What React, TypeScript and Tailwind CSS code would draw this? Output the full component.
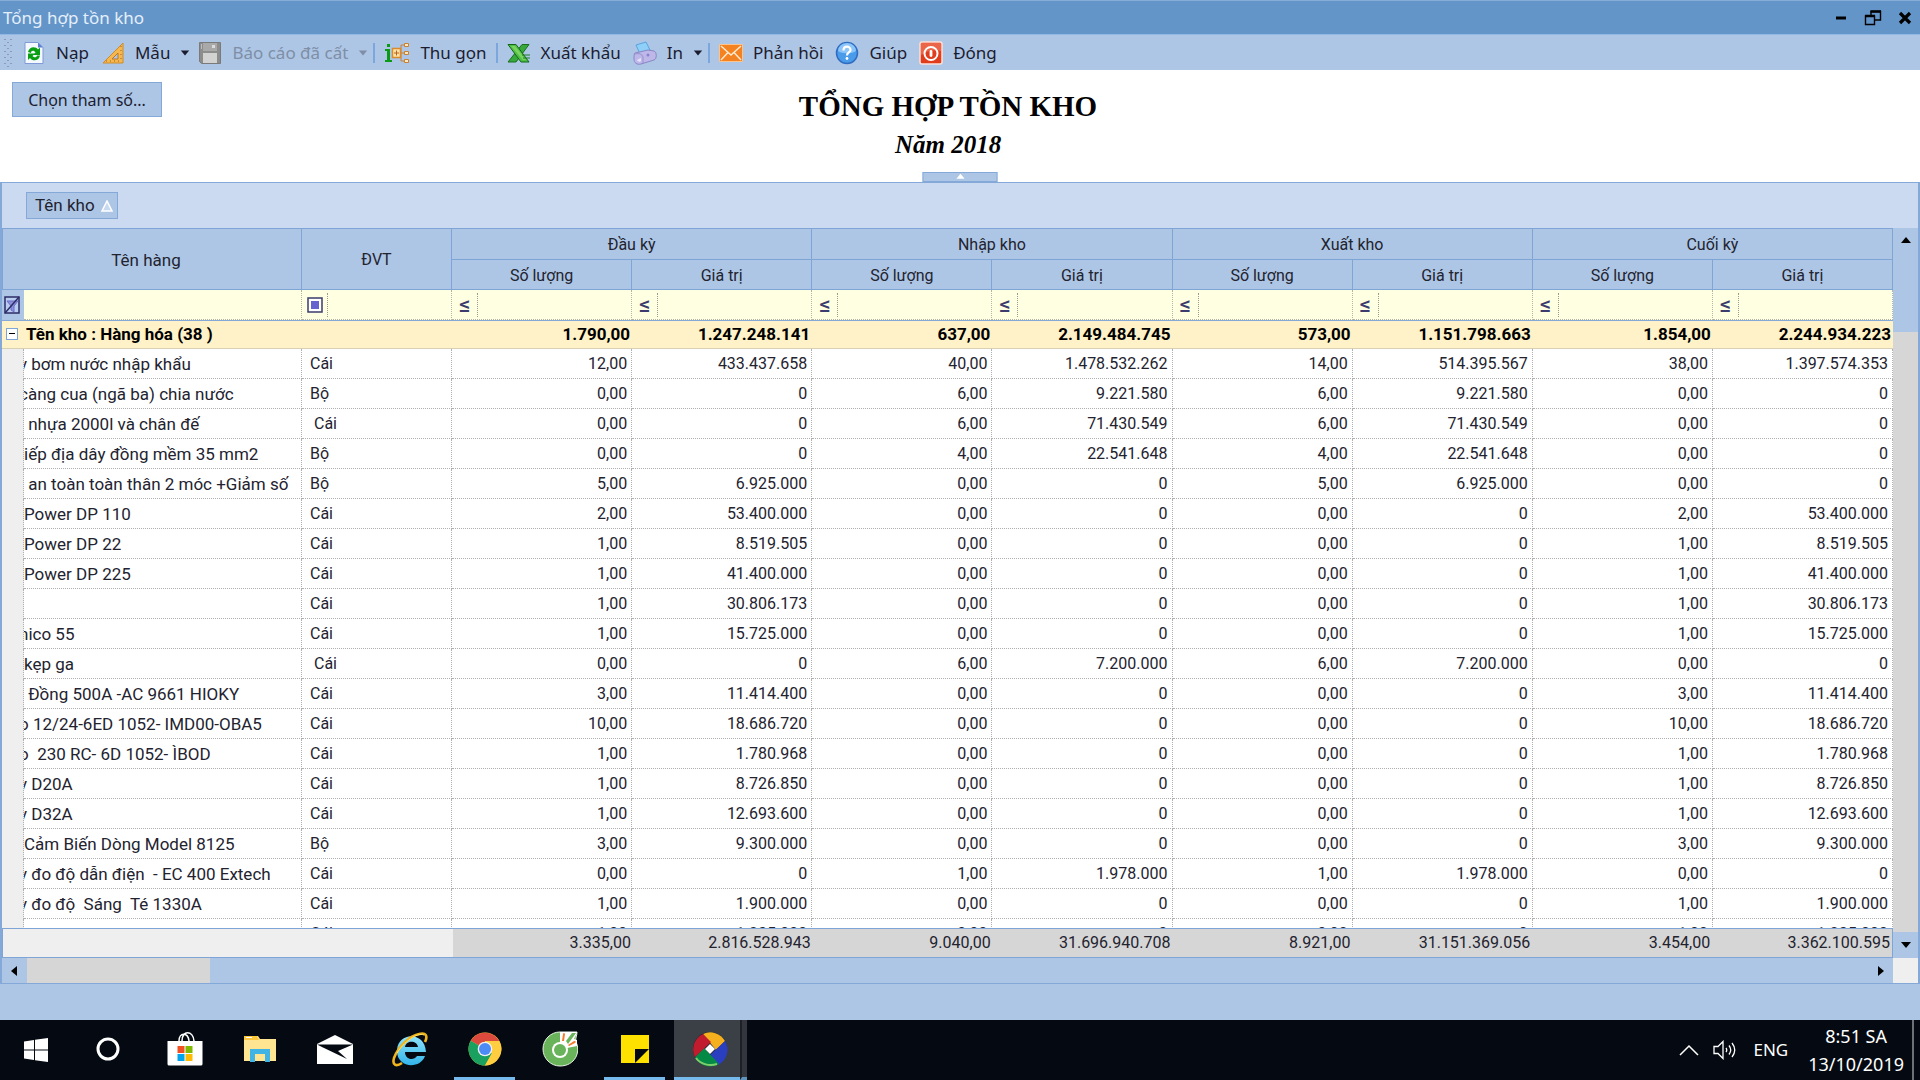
import { useState } from 'react'
import type { ReactNode } from 'react'

const UI_FONT = "font-['Noto_Sans','Open_Sans',sans-serif]"
const GRID_FONT = "font-['Roboto','Liberation_Sans',sans-serif]"

interface StockRow {
  name: string
  // name starts with a letter that the horizontal scroll cuts in half
  cut?: boolean
  unit: string
  values: string[]
}

const GROUPS = ['Đầu kỳ', 'Nhập kho', 'Xuất kho', 'Cuối kỳ']

const GROUP_SUMS = ['1.790,00', '1.247.248.141', '637,00', '2.149.484.745', '573,00', '1.151.798.663', '1.854,00', '2.244.934.223']

const TOTALS = ['3.335,00', '2.816.528.943', '9.040,00', '31.696.940.708', '8.921,00', '31.151.369.056', '3.454,00', '3.362.100.595']

const ROWS: StockRow[] = [
  { name: 'y bơm nước nhập khẩu', cut: true, unit: 'Cái', values: ['12,00', '433.437.658', '40,00', '1.478.532.262', '14,00', '514.395.567', '38,00', '1.397.574.353'] },
  { name: 'càng cua (ngã ba) chia nước', cut: true, unit: 'Bộ', values: ['0,00', '0', '6,00', '9.221.580', '6,00', '9.221.580', '0,00', '0'] },
  { name: ' nhựa 2000l và chân đế', unit: ' Cái', values: ['0,00', '0', '6,00', '71.430.549', '6,00', '71.430.549', '0,00', '0'] },
  { name: 'iếp địa dây đồng mềm 35 mm2', unit: 'Bộ', values: ['0,00', '0', '4,00', '22.541.648', '4,00', '22.541.648', '0,00', '0'] },
  { name: ' an toàn toàn thân 2 móc +Giảm số', unit: 'Bộ', values: ['5,00', '6.925.000', '0,00', '0', '5,00', '6.925.000', '0,00', '0'] },
  { name: 'Power DP 110', unit: 'Cái', values: ['2,00', '53.400.000', '0,00', '0', '0,00', '0', '2,00', '53.400.000'] },
  { name: 'Power DP 22', unit: 'Cái', values: ['1,00', '8.519.505', '0,00', '0', '0,00', '0', '1,00', '8.519.505'] },
  { name: 'Power DP 225', unit: 'Cái', values: ['1,00', '41.400.000', '0,00', '0', '0,00', '0', '1,00', '41.400.000'] },
  { name: '', unit: 'Cái', values: ['1,00', '30.806.173', '0,00', '0', '0,00', '0', '1,00', '30.806.173'] },
  { name: 'nico 55', cut: true, unit: 'Cái', values: ['1,00', '15.725.000', '0,00', '0', '0,00', '0', '1,00', '15.725.000'] },
  { name: 'kẹp ga', unit: ' Cái', values: ['0,00', '0', '6,00', '7.200.000', '6,00', '7.200.000', '0,00', '0'] },
  { name: ' Đồng 500A -AC 9661 HIOKY', unit: 'Cái', values: ['3,00', '11.414.400', '0,00', '0', '0,00', '0', '3,00', '11.414.400'] },
  { name: 'o 12/24-6ED 1052- IMD00-OBA5', cut: true, unit: 'Cái', values: ['10,00', '18.686.720', '0,00', '0', '0,00', '0', '10,00', '18.686.720'] },
  { name: 'o  230 RC- 6D 1052- ÌBOD', cut: true, unit: 'Cái', values: ['1,00', '1.780.968', '0,00', '0', '0,00', '0', '1,00', '1.780.968'] },
  { name: 'y D20A', cut: true, unit: 'Cái', values: ['1,00', '8.726.850', '0,00', '0', '0,00', '0', '1,00', '8.726.850'] },
  { name: 'y D32A', cut: true, unit: 'Cái', values: ['1,00', '12.693.600', '0,00', '0', '0,00', '0', '1,00', '12.693.600'] },
  { name: 'Cảm Biến Dòng Model 8125', unit: 'Bộ', values: ['3,00', '9.300.000', '0,00', '0', '0,00', '0', '3,00', '9.300.000'] },
  { name: 'y đo độ dẫn điện  - EC 400 Extech', cut: true, unit: 'Cái', values: ['0,00', '0', '1,00', '1.978.000', '1,00', '1.978.000', '0,00', '0'] },
  { name: 'y đo độ  Sáng  Té 1330A', cut: true, unit: 'Cái', values: ['1,00', '1.900.000', '0,00', '0', '0,00', '0', '1,00', '1.900.000'] },
  { name: 'y đo STRUMA 20-DBAB', cut: true, unit: 'Cái', values: ['1,00', '1.235.000', '0,00', '0', '0,00', '0', '1,00', '1.235.000'] },
]

/* ---------- icons ---------- */

function Caret({ dir, className = 'size-3' }: { dir: 'up' | 'down' | 'left' | 'right'; className?: string }) {
  const points = {
    up: '1,8 6,2 11,8',
    down: '1,3 11,3 6,9',
    left: '8,1 8,11 2,6',
    right: '3,1 9,6 3,11',
  }[dir]
  return (
    <svg viewBox="0 0 12 12" className={['shrink-0', className].join(' ')} aria-hidden="true">
      <polygon points={points} fill="currentColor" />
    </svg>
  )
}

function ReloadIcon() {
  return (
    <svg viewBox="0 0 24 24" className="size-6">
      <path d="M3 1.500H16l5 5v16H3z" fill="#f4f8ff" stroke="#7f9ad6" />
      <path d="M16 1.500v5h5z" fill="#5d7fd0" />
      <path d="M6 11c1-6 8-6 10-2.500l2-2V14h-7l2.500-2.500C12 9 9 9.500 9 12z" fill="#0a9e12" />
      <path d="M18 14.500c-1 6-8 6-10 2.500l-2 2v-6.500h7L10.500 15c1.500 2 4.500 1.500 4.500-.5z" fill="#0a9e12" />
    </svg>
  )
}

function SetSquareIcon() {
  return (
    <svg viewBox="0 0 24 24" className="size-6">
      <path d="M22 2v20H2z" fill="#f6b84c" stroke="#cf8b2a" />
      <path d="M17 12v6h-6z" fill="#adc6e5" stroke="#b9742a" />
      <path d="M20 5v1M20 9v1M20 13v1M20 17v1M5 20h1M9 20h1M13 20h1M17 20h1" stroke="#9a6220" />
    </svg>
  )
}

function SaveIcon() {
  return (
    <svg viewBox="0 0 24 24" className="size-6">
      <path d="M1.500 1.500h21v21h-19l-2-2z" fill="#8c8c8c" stroke="#7a7a7a" />
      <path d="M5 2h14v8H5z" fill="#a9a9a9" />
      <path d="M14 4h3v3h-3z" fill="#dcdcdc" />
      <path d="M5 12h14v10H5z" fill="#d2d2d2" />
      <path d="M3.500 3v5" stroke="#bdbdbd" />
    </svg>
  )
}

function TreeIcon() {
  return (
    <svg viewBox="0 0 26 24" className="h-6 w-[26px]">
      <path d="M3 3h3v3H3zM1 8h5v11h2v2H1v-2h2v-9H1z" fill="#0b9a16" />
      <path d="M15 12h6M17 4v16M17 4h4M17 20h4" stroke="#c98036" fill="none" />
      <path d="M8.500 7.500h8v9h-8z" fill="#ffe3a6" stroke="#d98a2b" strokeWidth="1.500" />
      <path d="M10 12h5M12.500 9.500v5" stroke="#b5651d" />
      <g fill="#ffe9bd" stroke="#c98036">
        <path d="M20.500 2.500h4v3h-4zM20.500 10.500h4v3h-4zM20.500 18.500h4v3h-4z" />
      </g>
    </svg>
  )
}

function ExcelIcon() {
  return (
    <svg viewBox="0 0 24 24" className="size-6">
      <path d="M15 3.500h7L9 21H1z" fill="#37a93c" stroke="#1c6e1f" />
      <path d="M1 3.500h8L22 21h-8z" fill="#4fbf45" stroke="#14661a" />
      <path d="M4 5h4l11 14h-3z" fill="#8fdd6c" opacity=".7" />
      <path d="M15 14h8M16 17h7" stroke="#1f7d24" />
    </svg>
  )
}

function PrinterIcon() {
  return (
    <svg viewBox="0 0 24 24" className="size-6">
      <path d="M3 4l10-3 4 8-10 4z" fill="#8fd0f8" stroke="#5aa3de" />
      <path d="M2 12l13-3 6 1c3 1 3 8 0 9L8 23c-4 1-7-1-7-5 0-3 0-5 1-6z" fill="#bdb8e8" stroke="#8b85c6" />
      <path d="M2 13c4-1 7 0 8 3v6" fill="none" stroke="#9690cf" />
      <circle cx="15" cy="14" r="1.500" fill="#8d7fd1" />
      <path d="M4 19c1 2 3 2 4 1v-3z" fill="#e5e3fa" />
    </svg>
  )
}

function MailIcon() {
  return (
    <svg viewBox="0 0 24 24" className="size-6">
      <path d="M.5 3.500h23v17H.5z" fill="#f58220" stroke="#f9c48e" />
      <path d="M2 5l10 9L22 5M2 19l7-7.500M22 19l-7-7.500" stroke="#ffe9d0" strokeWidth="1.500" fill="none" />
    </svg>
  )
}

function HelpIcon() {
  return (
    <svg viewBox="0 0 24 24" className="size-6">
      <circle cx="12" cy="12" r="10.500" fill="#4a9bea" stroke="#2f6bc0" strokeWidth="1.500" />
      <path d="M3 10a9 8 0 0 1 18 0c-4 3-14 3-18 0z" fill="#8cc5fa" />
      <path d="M8.500 9.500c0-5 7-5 7-.5 0 2.500-3.500 2.500-3.500 5.500" stroke="#fff" strokeWidth="2.200" fill="none" />
      <circle cx="12" cy="17.500" r="1.400" fill="#fff" />
    </svg>
  )
}

function PowerIcon() {
  return (
    <svg viewBox="0 0 24 24" className="size-6">
      <rect x="1" y="1" width="22" height="22" rx="2" fill="#df3d1c" stroke="#fbe0d8" strokeWidth="1.500" />
      <path d="M2 2h20v8C15 8 8 10 2 14z" fill="#f0785c" opacity=".7" />
      <circle cx="12" cy="12.500" r="6.500" fill="none" stroke="#fff" strokeWidth="2" />
      <path d="M12 10.500v4" stroke="#fff" strokeWidth="2.800" strokeLinecap="round" />
    </svg>
  )
}

function FunnelIcon() {
  return (
    <svg viewBox="0 0 16 18" className="h-[18px] w-4">
      <path d="M1 1h14v16H1z" fill="#b9cdf0" stroke="#2c2c66" strokeWidth="1.500" />
      <path d="M3 5h11l-4 5v6l-3-2v-4z" fill="#8f90dc" stroke="#6c6cc8" />
      <path d="M15 1L1 17" stroke="#2c2c66" strokeWidth="1.500" />
    </svg>
  )
}

/* ---------- window chrome ---------- */

function TitleBar() {
  return (
    <header className="flex h-[34px] shrink-0 items-center justify-between border-t border-[#87acd8] bg-[#6495c8] pl-[3px] pr-2">
      <h1 className="text-[17px] text-[#e4effb]">Tổng hợp tồn kho</h1>
      <div className="flex items-center gap-4 text-black">
        <button type="button" aria-label="Thu nhỏ">
          <svg viewBox="0 0 14 14" className="size-3.5"><path d="M2 7h10" stroke="currentColor" strokeWidth="3" /></svg>
        </button>
        <button type="button" aria-label="Khôi phục">
          <svg viewBox="0 0 18 16" className="h-4 w-[18px]" fill="none" stroke="currentColor">
            <path d="M1.500 6h9v8.500h-9zM7 6V1.500h9.500V10H11" strokeWidth="1.400" />
            <path d="M1 6h10M6.500 1.500H17" strokeWidth="2.500" />
          </svg>
        </button>
        <button type="button" aria-label="Đóng cửa sổ">
          <svg viewBox="0 0 14 14" className="size-3.5"><path d="M2 2l10 10M12 2L2 12" stroke="currentColor" strokeWidth="3.200" /></svg>
        </button>
      </div>
    </header>
  )
}

interface ToolButtonProps {
  icon: ReactNode
  label: string
  menu?: boolean
  disabled?: boolean
}

function ToolButton({ icon, label, menu, disabled }: ToolButtonProps) {
  return (
    <button
      type="button"
      disabled={disabled}
      className={[
        'flex items-center gap-2.5 whitespace-nowrap pl-1 text-[#1c1c30] disabled:text-[#7f8ea6]',
        menu ? 'pr-0' : 'pr-1',
      ].join(' ')}
    >
      {icon}
      <span>{label}</span>
      {menu && <Caret dir="down" className="size-2.5" />}
    </button>
  )
}

function Separator() {
  return <span className="mx-px h-5 w-0.5 bg-[#7ba7dd]" />
}

function Toolbar() {
  return (
    <div role="toolbar" className="flex h-9 shrink-0 items-center gap-1 border-t border-[#93b8e3] bg-[#adc6e5] pl-1 text-[17px]">
      <svg viewBox="0 0 8 30" className="mr-0.5 h-[30px] w-2" aria-hidden="true">
        {[1, 7, 13, 19, 25].map(y => (
          <g key={y} fill="#8f97bd">
            <rect x="0" y={y} width="2" height="1" />
            <rect x="6" y={y} width="2" height="1" />
            <rect x="3" y={y + 3} width="2" height="1" />
          </g>
        ))}
      </svg>
      <ToolButton icon={<ReloadIcon />} label="Nạp" />
      <ToolButton icon={<SetSquareIcon />} label="Mẫu" menu />
      <ToolButton icon={<SaveIcon />} label="Báo cáo đã cất" menu disabled />
      <Separator />
      <ToolButton icon={<TreeIcon />} label="Thu gọn" />
      <Separator />
      <ToolButton icon={<ExcelIcon />} label="Xuất khẩu" />
      <ToolButton icon={<PrinterIcon />} label="In" menu />
      <Separator />
      <ToolButton icon={<MailIcon />} label="Phản hồi" />
      <ToolButton icon={<HelpIcon />} label="Giúp" />
      <ToolButton icon={<PowerIcon />} label="Đóng" />
    </div>
  )
}

function ReportHeader({ onToggle }: { onToggle: () => void }) {
  return (
    <section className="relative flex h-28 shrink-0 flex-col bg-white pr-6 text-center">
      <button
        type="button"
        className="absolute left-3 top-3 h-[35px] w-[150px] border border-[#84a9d8] bg-[#adc6e5] text-base text-[#1c1c30]"
      >
        Chọn tham số...
      </button>
      <h2 className="pt-5 font-['Liberation_Serif','Times_New_Roman',serif] text-[29px] font-bold leading-8 text-black">
        TỔNG HỢP TỒN KHO
      </h2>
      <p className="pt-2 font-['Liberation_Serif','Times_New_Roman',serif] text-[25px] font-bold italic leading-[30px] text-black">
        Năm 2018
      </p>
      <button
        type="button"
        aria-label="Ẩn tiêu đề"
        onClick={onToggle}
        className="absolute bottom-0 left-1/2 flex h-2.5 w-[75px] -translate-x-1/2 items-center justify-center border border-[#84a9d8] bg-[#adc6e5] text-white"
      >
        <Caret dir="up" className="size-2.5" />
      </button>
    </section>
  )
}

/* ---------- grid ---------- */

function Columns() {
  return (
    <colgroup>
      <col className="w-[22px]" />
      <col className="w-[278px]" />
      <col className="w-[150px]" />
      {TOTALS.map((_, i) => <col key={i} />)}
    </colgroup>
  )
}

function FilterCell({ label, icon }: { label: string; icon: ReactNode }) {
  return (
    <td className="border-b border-r border-dotted border-[#b4b4a8] bg-[#ffffe1] p-0">
      <div className="flex h-6 items-center">
        <button type="button" aria-label={`Toán tử ${label}`} className="flex h-6 w-[26px] shrink-0 items-center justify-center border-r border-dotted border-[#9a9a90] text-[#3b3b6d]">
          {icon}
        </button>
        <input type="text" aria-label={`Lọc ${label}`} className="h-6 min-w-0 flex-1 bg-transparent px-1 outline-none" />
      </div>
    </td>
  )
}

function StockTable() {
  const [open, setOpen] = useState(true)
  const head = 'border-b border-r border-[#7fa5d6] bg-[#adc6e5] p-0 pt-0.5 text-center font-normal'
  const cell = 'border-b border-r border-dotted border-[#b0b0b0] p-0 pt-px'
  const lessOrEqual = <span className="text-[22px] font-medium">≤</span>

  return (
    <table className="w-full table-fixed border-separate border-spacing-0 text-base leading-5 text-[#23232f]">
      <Columns />
      <thead>
        <tr className="h-[31px]">
          <th colSpan={2} rowSpan={2} scope="col" className={`${head} border-l pr-3 text-[17px]`}>Tên hàng</th>
          <th rowSpan={2} scope="col" className={head}>ĐVT</th>
          {GROUPS.map(g => <th key={g} colSpan={2} scope="colgroup" className={head}>{g}</th>)}
        </tr>
        <tr className="h-[30px]">
          {GROUPS.flatMap(g => [
            <th key={`${g}-sl`} scope="col" className={head}>Số lượng</th>,
            <th key={`${g}-gt`} scope="col" className={head}>Giá trị</th>,
          ])}
        </tr>
      </thead>
      <tbody>
        <tr className="h-[30px]">
          <td className="bg-[#adc6e5] p-0 pl-0.5">
            <button type="button" aria-label="Xóa điều kiện lọc" className="flex"><FunnelIcon /></button>
          </td>
          <td className="border-b border-r border-dotted border-[#b4b4a8] bg-[#ffffe1] p-0">
            <input type="text" aria-label="Lọc Tên hàng" className="h-6 w-full bg-transparent px-1 outline-none" />
          </td>
          <FilterCell label="ĐVT" icon={<svg viewBox="0 0 18 18" className="size-[18px]"><path d="M2 2h14v14H2z" fill="#fff" stroke="currentColor" strokeWidth="1.500" /><path d="M5 5h8v8H5z" fill="#6663cf" /></svg>} />
          {GROUPS.flatMap(g => [
            <FilterCell key={`${g}-sl`} label={`${g} số lượng`} icon={lessOrEqual} />,
            <FilterCell key={`${g}-gt`} label={`${g} giá trị`} icon={lessOrEqual} />,
          ])}
        </tr>
        <tr className="h-[29px] bg-[#fff2c8] text-[17px] font-bold text-black">
          <td colSpan={3} className="border-b border-t border-b-[#d8d0b4] border-t-[#84a9d8] p-0 pb-0.5 pl-1">
            <div className="flex items-center gap-2">
              <button
                type="button"
                aria-label="Thu gọn nhóm"
                aria-expanded={open}
                onClick={() => setOpen(v => !v)}
                className="flex size-3 items-center justify-center border border-[#7fa5d6] bg-white"
              >
                <span className="h-px w-1.5 bg-black" />
              </button>
              <span>Tên kho : Hàng hóa (38 )</span>
            </div>
          </td>
          {GROUP_SUMS.map((v, i) => (
            <td key={i} className="border-b border-t border-b-[#d8d0b4] border-t-[#84a9d8] p-0 pb-0.5 pr-0.5 text-right">{v}</td>
          ))}
        </tr>
        {open && ROWS.map((row, i) => (
          <tr key={i} className="h-[30px]">
            <td className="border-r border-dotted border-[#b0b0b0] bg-[#efefef] p-0" />
            <td className={`${cell} text-[17px]`}>
              <div className="overflow-hidden whitespace-pre">
                <span className={row.cut ? '-ml-[5px]' : ''}>{row.name}</span>
              </div>
            </td>
            <td className={`${cell} whitespace-pre pl-2`}>{row.unit}</td>
            {row.values.map((v, j) => <td key={j} className={`${cell} pr-1 text-right`}>{v}</td>)}
          </tr>
        ))}
      </tbody>
    </table>
  )
}

function TotalsTable() {
  return (
    <table className="w-full shrink-0 table-fixed border-separate border-spacing-0 border border-[#7fa5d6] text-base leading-5 text-[#23232f]">
      <Columns />
      <tbody>
        <tr className="h-7">
          <td colSpan={3} className="bg-[#efefef] p-0" />
          {TOTALS.map((v, i) => <td key={i} className="bg-[#d6d6d6] p-0 pr-0.5 text-right">{v}</td>)}
        </tr>
      </tbody>
    </table>
  )
}

function Grid() {
  return (
    <main className={`flex min-h-0 flex-1 flex-col border-x-2 border-b border-t border-[#84a9d8] ${GRID_FONT}`}>
      <div className="flex h-[45px] shrink-0 items-center bg-[#cbdaf0] pl-6">
        <button type="button" className="flex h-[27px] items-center gap-1.5 border border-[#84a9d8] bg-[#adc6e5] pl-2 pr-1 text-[17px] text-[#23232f]">
          Tên kho
          <svg viewBox="0 0 12 12" className="size-3" aria-hidden="true">
            <path d="M6 1L1 11h10z" fill="#c9daf0" stroke="#fff" strokeWidth="1.500" />
          </svg>
        </button>
      </div>
      <div className="flex min-h-0 flex-1">
        <div className="flex min-w-0 flex-1 flex-col border-t border-[#7fa5d6]">
          <div className="min-h-0 flex-1 overflow-hidden bg-white">
            <StockTable />
          </div>
          <TotalsTable />
        </div>
        <div className="flex w-[25px] shrink-0 flex-col bg-[#adc6e5] text-black">
          <button type="button" aria-label="Cuộn lên" className="flex h-[26px] items-center justify-center"><Caret dir="up" /></button>
          <div className="h-[78px]" />
          <div className="flex-1 bg-[#d6d6d6]" />
          <button type="button" aria-label="Cuộn xuống" className="flex h-[26px] items-center justify-center"><Caret dir="down" /></button>
        </div>
      </div>
      <div className="flex h-[25px] shrink-0 bg-[#adc6e5] text-black">
        <button type="button" aria-label="Cuộn trái" className="flex w-[25px] items-center justify-center"><Caret dir="left" /></button>
        <div className="w-[183px] bg-[#d6d6d6]" />
        <div className="flex-1" />
        <button type="button" aria-label="Cuộn phải" className="flex w-[25px] items-center justify-center"><Caret dir="right" /></button>
        <div className="w-[25px] bg-[#efefef]" />
      </div>
    </main>
  )
}

/* ---------- taskbar ---------- */

interface TaskButtonProps {
  label: string
  running?: boolean
  children: ReactNode
}

function TaskButton({ label, running, children }: TaskButtonProps) {
  return (
    <button type="button" aria-label={label} className="flex w-[75px] flex-col items-center">
      <span className="flex flex-1 items-center">{children}</span>
      <span className={running ? 'h-[3px] w-[61px] bg-[#76b9ed]' : 'h-[3px]'} />
    </button>
  )
}

function Taskbar() {
  return (
    <footer className="flex h-[60px] shrink-0 bg-[#050a12] text-white">
      <button type="button" aria-label="Start" className="flex w-[72px] items-center justify-center">
        <svg viewBox="0 0 24 24" className="size-6" fill="#fff">
          <path d="M0 3.400L10 2v9.500H0zM11 1.800L24 0v11.500H11zM0 12.500h10V22L0 20.600zM11 12.500h13V24l-13-1.800z" />
        </svg>
      </button>
      <TaskButton label="Cortana">
        <svg viewBox="0 0 24 24" className="mr-1 size-6"><circle cx="12" cy="12" r="10" fill="none" stroke="#fff" strokeWidth="3" /></svg>
      </TaskButton>
      <TaskButton label="Microsoft Store">
        <svg viewBox="0 0 36 36" className="size-9">
          <path d="M12 10c0-9 9-9 10 0M15 10c0-11 11-11 12 0" fill="none" stroke="#fff" strokeWidth="1.500" />
          <path d="M.5 10h35v23a1.500 1.500 0 0 1-1.500 1.500H2A1.500 1.500 0 0 1 .5 33z" fill="#fff" />
          <path d="M10.500 15h7v7h-7z" fill="#f25022" /><path d="M18.500 15h7v7h-7z" fill="#7fba00" />
          <path d="M10.500 23h7v7h-7z" fill="#00a4ef" /><path d="M18.500 23h7v7h-7z" fill="#ffb900" />
        </svg>
      </TaskButton>
      <TaskButton label="File Explorer">
        <svg viewBox="0 0 32 28" className="h-7 w-8">
          <path d="M0 1h14l2 3h16v22H0z" fill="#ffe592" />
          <path d="M0 1h13l2 4H0z" fill="#ffc83d" /><path d="M2 2.500h6" stroke="#fff" />
          <path d="M6 27V14h20v13h-5v-8H11v8z" fill="#40b4e5" />
        </svg>
      </TaskButton>
      <TaskButton label="Mail">
        <svg viewBox="0 0 36 30" className="h-[30px] w-9">
          <path d="M0 10L18 1l18 9v20H0z" fill="#fff" />
          <path d="M0 10.500h36L21 17l9 8L6 13.500z" fill="#050a12" />
        </svg>
      </TaskButton>
      <TaskButton label="Internet Explorer">
        <svg viewBox="0 0 36 36" className="size-9">
          <defs>
            <linearGradient id="ie" x1="0" y1="0" x2="0" y2="1"><stop offset="0" stopColor="#8fe3fb" /><stop offset="1" stopColor="#32b4ea" /></linearGradient>
          </defs>
          <path d="M34 21H13c0 8 9 9 12 4h8c-5 14-29 12-28-6C6 1 33 0 34 21zM26 16c-1-7-12-7-13 0z" fill="url(#ie)" />
          <path d="M33 11c3-6 1-10-6-8C17 5 6 16 2 27c-2 7 2 9 8 5" fill="none" stroke="#f0b51d" strokeWidth="2.600" />
          <path d="M32 4c-7-3-20 7-27 18" fill="none" stroke="#ffe36b" />
        </svg>
      </TaskButton>
      <TaskButton label="Google Chrome" running>
        <svg viewBox="0 0 34 34" className="size-[34px]">
          <circle cx="17" cy="17" r="16.500" fill="#ffcd40" />
          <path d="M17 17L2.700 8.800A16.500 16.500 0 0 1 31.300 9H17z" fill="#db4a3c" />
          <path d="M2.700 8.800A16.500 16.500 0 0 0 17 33.500l7-12-7-4.500z" fill="#1aa15f" />
          <path d="M24 21l-7 12.500A16.500 16.500 0 0 0 31.300 9H17z" fill="#ffcd40" />
          <circle cx="17" cy="17" r="7.300" fill="#f1f1f1" /><circle cx="17" cy="17" r="6" fill="#4c8bf5" />
        </svg>
      </TaskButton>
      <TaskButton label="Cốc Cốc">
        <svg viewBox="0 0 36 36" className="size-9">
          <path d="M18 1h17c0 4-2 6-1 10 5 10-1 24-16 24A17 17 0 0 1 18 1z" fill="#69b45b" stroke="#e8f5e4" />
          <path d="M18 1h17l-1 3-2 4 3 1v6l-10 2-7-5z" fill="#fff" />
          <path d="M24 10l6-8h4l-8 11z" fill="#69b45b" />
          <circle cx="18" cy="19" r="8" fill="#fff" /><circle cx="18" cy="19" r="6" fill="#69b45b" />
          <path d="M20 10l1-7q1-2 2 0l-1 7zM26 14l6-4q3 0 1 2l-6 3z" fill="#f47b2a" />
        </svg>
      </TaskButton>
      <TaskButton label="Sticky Notes" running>
        <svg viewBox="0 0 28 28" className="size-7">
          <path d="M0 0h28v28H0z" fill="#ffe100" />
          <path d="M14 28V14h14z" fill="#050a12" /><path d="M15.500 27.500l12-12v12z" fill="#ffe100" />
        </svg>
      </TaskButton>
      <div className="flex w-[75px] justify-end">
        <button type="button" aria-label="MISA" aria-pressed="true" className="flex w-[66px] flex-col items-center bg-[#3b3f46]">
          <span className="flex flex-1 items-center pl-1.5">
            <svg viewBox="0 0 36 36" className="size-9">
              <circle cx="18" cy="18" r="17" fill="#26262e" />
              <path d="M11 3a17 17 0 0 1 22 7l-9 9z" fill="#f4b11d" />
              <path d="M33 10a17 17 0 0 1-7 24l-9-9z" fill="#2a3fc0" />
              <path d="M27 33A17 17 0 0 1 3 26l9-9z" fill="#058a45" />
              <path d="M3 26A17 17 0 0 1 11 3l8 8z" fill="#c11c2e" />
              <path d="M4 27c5 7 14 8 21 6" fill="none" stroke="#7ccf6b" strokeWidth="2" />
              <path d="M18 13l5 5-5 5-5-5z" fill="#fff" />
            </svg>
          </span>
          <span className="h-[3px] w-full bg-[#76b9ed]" />
        </button>
        <span className="w-[7px] border-b-[3px] border-l-2 border-b-[#5e93bd] border-l-[#1d2127] bg-[#33373d]" />
      </div>
      <div className="ml-auto flex items-center text-[17px]">
        <button type="button" aria-label="Biểu tượng ẩn" className="mr-3.5">
          <svg viewBox="0 0 20 12" className="h-3 w-5"><path d="M1 11l9-9 9 9" fill="none" stroke="#fff" strokeWidth="1.500" /></svg>
        </button>
        <button type="button" aria-label="Âm lượng" className="mr-4">
          <svg viewBox="0 0 24 20" className="h-5 w-6" fill="none" stroke="#fff" strokeWidth="1.300">
            <path d="M1 6.500h4L10 1.500v17l-5-5H1zM13 8q1.500 2 0 4M16 5.500q3.500 4.500 0 9M19 3q5.500 7 0 14" />
          </svg>
        </button>
        <span className="mr-5">ENG</span>
        <div className="mr-2 text-center text-lg leading-7">
          <div>8:51 SA</div>
          <div>13/10/2019</div>
        </div>
        <span className="mr-1.5 h-full w-0.5 bg-[#6d7075]" />
      </div>
    </footer>
  )
}

export default function App() {
  const [headerOpen, setHeaderOpen] = useState(true)

  return (
    <div className={`flex h-screen flex-col overflow-hidden bg-[#adc6e5] ${UI_FONT}`}>
      <TitleBar />
      <Toolbar />
      {headerOpen && <ReportHeader onToggle={() => setHeaderOpen(false)} />}
      <Grid />
      <div className="h-9 shrink-0 bg-[#adc6e5]" />
      <Taskbar />
    </div>
  )
}
